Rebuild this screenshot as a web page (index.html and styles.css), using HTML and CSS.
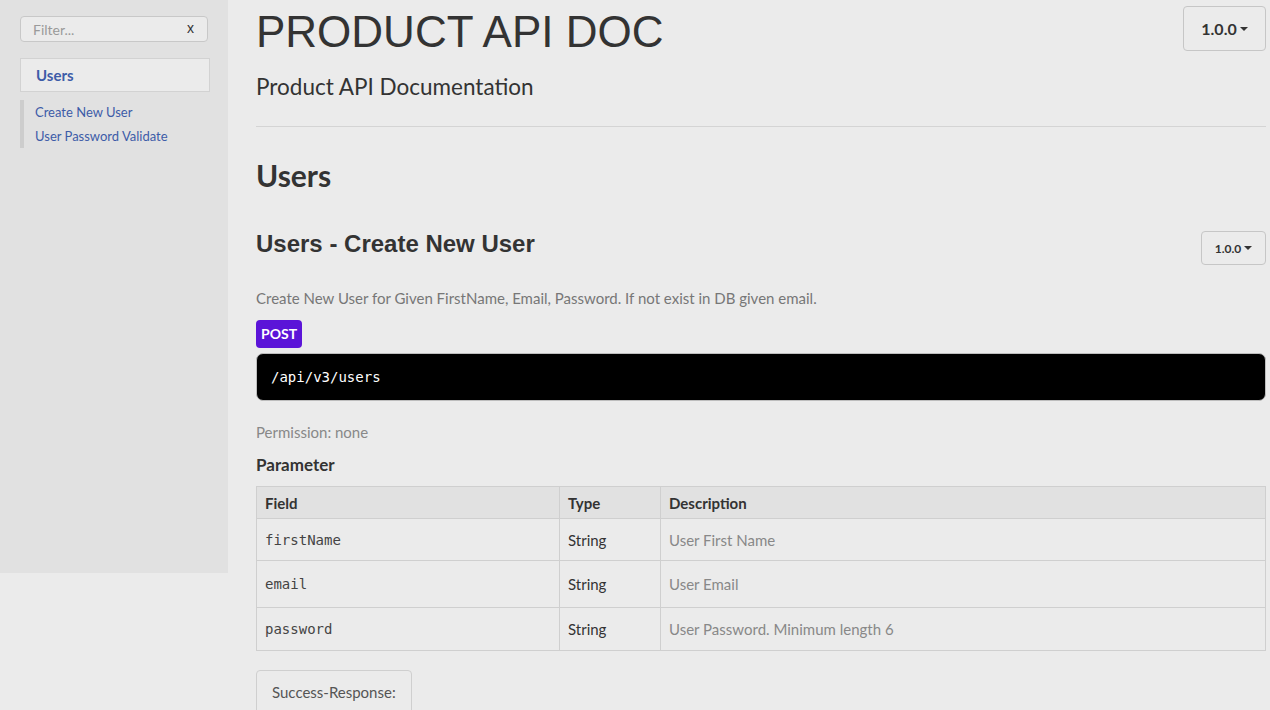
FILE: index.html
```html
<!DOCTYPE html>
<html lang="en">
<head>
<meta charset="utf-8">
<title>Product API Doc</title>
<link rel="stylesheet" href="styles.css">
</head>
<body>
<nav class="sidebar">
  <div class="filter">
    <input class="filter-input" type="text" placeholder="Filter...">
    <span class="filter-clear">x</span>
  </div>
  <div class="nav-group">Users</div>
  <ul class="nav-list">
    <li><a href="#">Create New User</a></li>
    <li><a href="#">User Password Validate</a></li>
  </ul>
</nav>
<main class="content">
  <header class="page-header">
    <h1 class="title">PRODUCT API DOC</h1>
    <button class="version version-lg">1.0.0<span class="caret"></span></button>
  </header>
  <p class="subtitle">Product API Documentation</p>
  <hr class="rule">
  <h2 class="section">Users</h2>
  <div class="api-head">
    <h3 class="api-title">Users - Create New User</h3>
    <button class="version version-sm">1.0.0<span class="caret"></span></button>
  </div>
  <p class="api-desc">Create New User for Given FirstName, Email, Password. If not exist in DB given email.</p>
  <span class="badge">POST</span>
  <pre class="endpoint">/api/v3/users</pre>
  <p class="permission">Permission: none</p>
  <h4 class="param-title">Parameter</h4>
  <table class="params">
    <thead>
      <tr><th class="c-field">Field</th><th class="c-type">Type</th><th>Description</th></tr>
    </thead>
    <tbody>
      <tr class="r1"><td class="code">firstName</td><td>String</td><td class="muted">User First Name</td></tr>
      <tr class="r2"><td class="code">email</td><td>String</td><td class="muted">User Email</td></tr>
      <tr class="r3"><td class="code">password</td><td>String</td><td class="muted">User Password. Minimum length 6</td></tr>
    </tbody>
  </table>
  <button class="tab">Success-Response:</button>
</main>
</body>
</html>
```
FILE: styles.css
```css
html, body {
  margin: 0;
  padding: 0;
}
body {
  background: #ebebeb;
  font-family: Lato, "Noto Sans", sans-serif;
  color: #333;
  display: flex;
  align-items: flex-start;
  overflow: hidden;
}
.sidebar {
  width: 228px;
  height: 573px;
  flex: none;
  background: #e1e1e1;
  box-sizing: border-box;
  padding: 16px 18px 0 20px;
}
.filter {
  position: relative;
  width: 188px;
}
.filter-input {
  display: block;
  box-sizing: border-box;
  width: 188px;
  height: 26px;
  border: 1px solid #c8c8c8;
  border-radius: 4px;
  background: #ebebeb;
  padding: 0 12px;
  font-family: Lato, sans-serif;
  font-size: 14px;
  color: #555;
}
.filter-input::placeholder {
  color: #9a9a9a;
}
.filter-clear {
  position: absolute;
  right: 14px;
  top: 4px;
  font-family: "Liberation Sans", sans-serif;
  font-size: 14px;
  color: #333;
}
.nav-group {
  margin-top: 16px;
  height: 34px;
  box-sizing: border-box;
  border: 1px solid #d2d2d2;
  background: #ebebeb;
  padding-left: 15px;
  line-height: 32px;
  font-weight: bold;
  font-size: 15px;
  color: #3d5ca8;
}
.nav-list {
  list-style: none;
  margin: 8px 0 0;
  padding: 0 0 0 11px;
  border-left: 4px solid #cdcdcd;
}
.nav-list li {
  line-height: 24px;
  font-size: 13px;
}
.nav-list a {
  color: #3d5ca8;
  text-decoration: none;
}
.content {
  flex: none;
  width: 1010px;
  margin-left: 28px;
}
.page-header {
  display: flex;
  justify-content: space-between;
  align-items: flex-start;
}
.title {
  margin: 8px 0 0;
  font-family: "Liberation Sans", Arial, sans-serif;
  font-weight: normal;
  font-size: 44px;
  line-height: 48px;
  color: #333;
}
.version {
  font-family: Lato, sans-serif;
  font-weight: bold;
  color: #333;
  background: #ebebeb;
  border: 1px solid #c6c6c6;
  border-radius: 4px;
  display: flex;
  align-items: center;
  justify-content: center;
  padding: 0;
  box-sizing: border-box;
}
.version-lg {
  margin-top: 6px;
  width: 83px;
  height: 45px;
  font-size: 16px;
}
.version-sm {
  margin-top: 21px;
  width: 65px;
  height: 34px;
  font-size: 12px;
}
.caret {
  display: inline-block;
  width: 0;
  height: 0;
  margin-left: 3px;
  border-left: 4px solid transparent;
  border-right: 4px solid transparent;
  border-top: 4px solid #333;
}
.subtitle {
  margin: 15px 0 0;
  font-size: 22.5px;
  line-height: 32px;
  color: #333;
}
.rule {
  margin: 23px 0 0;
  border: 0;
  border-top: 1px solid #d4d4d4;
}
.section {
  margin: 29px 0 0;
  font-size: 30px;
  line-height: 38px;
  font-weight: bold;
  color: #333;
}
.api-head {
  margin-top: 16px;
  display: flex;
  justify-content: space-between;
  align-items: flex-start;
}
.api-title {
  margin: 20px 0 0;
  font-family: "Liberation Sans", Arial, sans-serif;
  font-size: 24px;
  line-height: 28px;
  font-weight: bold;
  color: #333;
}
.api-desc {
  margin: 23px 0 0;
  font-size: 15px;
  line-height: 20px;
  color: #777;
}
.badge {
  display: inline-block;
  margin-top: 12px;
  height: 28px;
  line-height: 28px;
  padding: 0 5px;
  border-radius: 4px;
  background: #5b14d8;
  color: #fff;
  font-size: 14px;
  font-weight: bold;
}
.endpoint {
  margin: 5px 0 0;
  height: 48px;
  box-sizing: border-box;
  background: #000;
  color: #fff;
  border: 1px solid #bdbdbd;
  border-radius: 7px;
  padding: 0 14px;
  line-height: 46px;
  font-family: "DejaVu Sans Mono", monospace;
  font-size: 14px;
}
.permission {
  margin: 21px 0 0;
  font-size: 15px;
  line-height: 20px;
  color: #888;
}
.param-title {
  margin: 12px 0 0;
  font-size: 17px;
  line-height: 22px;
  font-weight: bold;
  color: #333;
}
.params {
  margin-top: 10px;
  width: 100%;
  border-collapse: collapse;
  font-size: 15px;
}
.params th, .params td {
  border: 1px solid #cfcfcf;
  padding: 0 8px;
  text-align: left;
  vertical-align: middle;
}
.params th {
  background: #e1e1e1;
  height: 31px;
  font-weight: bold;
  color: #333;
}
.c-field { width: 286px; }
.c-type { width: 84px; }
.params tr.r1 td { height: 41px; }
.params tr.r2 td { height: 46px; }
.params tr.r3 td { height: 42px; }
.params td {
  color: #333;
}
.params td.code {
  font-family: "DejaVu Sans Mono", monospace;
  font-size: 14px;
  color: #444;
}
.params td.muted {
  color: #888;
}
.tab {
  margin-top: 19px;
  display: block;
  height: 44px;
  padding: 0 15px;
  background: #ebebeb;
  border: 1px solid #cfcfcf;
  border-radius: 4px;
  font-family: Lato, sans-serif;
  font-size: 15px;
  color: #555;
}
```
